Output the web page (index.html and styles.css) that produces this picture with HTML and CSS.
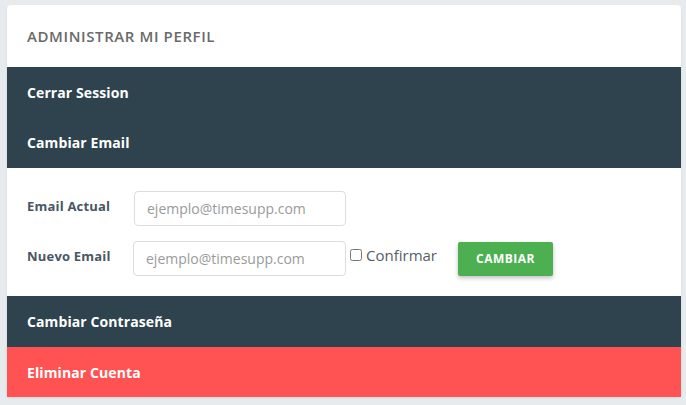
FILE: index.html
```html
<!DOCTYPE html>
<html lang="es">
<head>
<meta charset="utf-8">
<title>Administrar mi perfil</title>
<link rel="stylesheet" href="styles.css">
</head>
<body>
<div class="card">
  <div class="card-header">ADMINISTRAR MI PERFIL</div>
  <div class="item dark">Cerrar Session</div>
  <div class="item dark">Cambiar Email</div>
  <form class="form">
    <div class="row">
      <label class="label">Email Actual</label>
      <input class="input" type="email" placeholder="ejemplo@timesupp.com">
    </div>
    <div class="row">
      <label class="label">Nuevo Email</label>
      <input class="input" type="email" placeholder="ejemplo@timesupp.com">
      <label class="confirm"><input type="checkbox" class="check">Confirmar</label>
      <button type="button" class="btn">CAMBIAR</button>
    </div>
  </form>
  <div class="item dark tall">Cambiar Contraseña</div>
  <div class="item red">Eliminar Cuenta</div>
</div>
</body>
</html>
```
FILE: styles.css
```css
html, body { margin: 0; padding: 0; }
body {
  background: #e8ebee;
  font-family: "Open Sans", "Noto Sans", sans-serif;
  padding: 5px 5px 8px 7px;
}
.card {
  background: #fff;
  border-radius: 4px 4px 0 0;
  box-shadow: 0 1px 3px rgba(0,0,0,0.08);
  overflow: hidden;
}
.card-header {
  height: 62px;
  display: flex;
  align-items: center;
  padding-left: 20px;
  font-size: 15px;
  font-weight: 600;
  color: #6a6a6a;
  letter-spacing: 0.6px;
}
.item {
  height: 50px;
  display: flex;
  align-items: center;
  padding-left: 20px;
  font-size: 14px;
  font-weight: 700;
  color: #fff;
  letter-spacing: 0.1px;
}
.dark { background: #2f434f; }
.item.dark + .item.dark { height: 51px; }
.item.tall { height: 51px; }
.red { background: #ff5252; }
.form {
  padding: 23px 20px 20px 20px;
  display: flex;
  flex-direction: column;
  gap: 15px;
}
.row {
  display: flex;
  align-items: center;
  height: 35px;
}
.label {
  width: 107px;
  font-size: 13px;
  font-weight: 700;
  color: #4a5663;
  align-self: flex-start;
  padding-top: 6px;
  letter-spacing: 0.2px;
}
.row + .row .label { width: 106px; }
.input {
  width: 212px;
  height: 35px;
  box-sizing: border-box;
  border: 1px solid #dcdcdc;
  border-radius: 4px;
  padding: 0 12px;
  font-family: inherit;
  font-size: 14px;
  color: #555;
}
.row + .row .input { width: 213px; }
.input::placeholder { color: #9a9a9a; }
.confirm {
  display: flex;
  align-items: center;
  font-size: 15px;
  color: #555e66;
  margin-left: 4px;
  align-self: flex-start;
  padding-top: 4px;
}
.check {
  margin: 0 4px 0 0;
  width: 12px;
  height: 12px;
}
.btn {
  margin-left: 21px;
  width: 95px;
  height: 34px;
  background: #4caf50;
  border: none;
  border-radius: 2px;
  color: #fff;
  font-family: inherit;
  font-size: 12px;
  font-weight: 700;
  letter-spacing: 0.5px;
  box-shadow: 0 2px 4px rgba(0,0,0,0.25);
}
```
